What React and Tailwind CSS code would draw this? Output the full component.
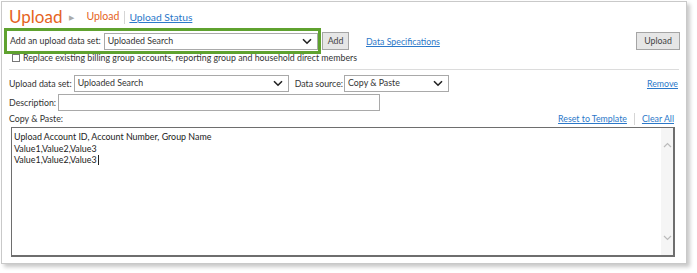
import React from "react";

const Chevron = ({ className = "" }) => (
  <svg width="10" height="7" viewBox="0 0 10 7" className={className}>
    <path d="M1 1.2 L5 5.2 L9 1.2" fill="none" stroke="#222" strokeWidth="1.6" />
  </svg>
);

const Select = ({ value, className = "" }) => (
  <div
    className={`flex items-center justify-between h-[17px] border border-[#a9a9a9] bg-white pl-[3px] pr-[5px] ${className}`}
  >
    <span className="leading-none">{value}</span>
    <Chevron />
  </div>
);

const Button = ({ children, className = "" }) => (
  <div
    className={`flex items-center justify-center h-[18px] border border-[#a5a5a5] bg-[#e6e6e6] text-[#444] ${className}`}
  >
    {children}
  </div>
);

const App = () => {
  return (
    <div
      className="bg-white w-[697px] h-[273px] pl-px pt-px text-[8.8px] text-[#333] whitespace-nowrap"
      style={{ fontFamily: 'Lato, "Open Sans", sans-serif' }}
    >
      <div className="w-[686px] h-[263px] border border-[#c9c9c9] bg-white shadow-[3px_3px_4px_rgba(0,0,0,0.22)] flex flex-col">
        {/* header */}
        <div className="flex items-end h-[25px] pl-[7px]">
          <span className="text-[17px] leading-none text-[#e5631d] pb-[2px]">Upload</span>
          <span className="ml-[7px] mb-[5px] text-[7px] text-[#aaa]">▶</span>
          <span className="ml-[12px] mb-[2px] text-[10.5px] text-[#e5631d]">Upload</span>
          <span className="ml-[5px] mb-[3px] h-[13px] border-l border-[#d5d5d5]" />
          <span className="ml-[4px] mb-[2px] text-[10.3px] text-[#2b78c9] underline">Upload Status</span>
        </div>

        {/* add data set */}
        <div className="flex items-center mt-[1px]">
          <div className="ml-[2px] w-[317px] h-[26px] border-[3px] border-[#5fa22f] flex items-center pl-[3px]">
            <span className="mr-[3px]">Add an upload data set:</span>
            <Select value="Uploaded Search" className="w-[215px]" />
          </div>
          <Button className="ml-[1px] w-[27px]">Add</Button>
          <span className="ml-[17px] mt-[2px] text-[#2b78c9] underline">Data Specifications</span>
          <div className="flex-1" />
          <Button className="mr-[6px] w-[44px]">Upload</Button>
        </div>

        {/* checkbox */}
        <div className="flex items-center pl-[10px] h-[10px] mt-[-1px]">
          <span className="w-[8px] h-[8px] border border-[#777] bg-white" />
          <span className="ml-[3px] leading-none">
            Replace existing billing group accounts, reporting group and household direct members
          </span>
        </div>

        <div className="mx-[7px] mt-[6px] border-t border-[#dcdcdc]" />

        {/* upload data set row */}
        <div className="flex items-center pl-[7px] mt-[5px]">
          <span className="mr-[2px]">Upload data set:</span>
          <Select value="Uploaded Search" className="w-[215px]" />
          <span className="ml-[6px] mr-[1px]">Data source:</span>
          <Select value="Copy & Paste" className="w-[105px]" />
          <div className="flex-1" />
          <span className="mr-[8px] text-[#2b78c9] underline">Remove</span>
        </div>

        {/* description */}
        <div className="flex items-center pl-[7px] mt-[2px]">
          <span className="mr-[2px]">Description:</span>
          <div className="w-[322px] h-[17px] border border-[#a9a9a9] bg-white" />
        </div>

        {/* copy paste header */}
        <div className="flex items-center pl-[7px] mt-[1px] h-[14px]">
          <span>Copy &amp; Paste:</span>
          <div className="flex-1" />
          <span className="text-[#2b78c9] underline">Reset to Template</span>
          <span className="mx-[7px] h-[12px] border-l border-[#d5d5d5]" />
          <span className="mr-[12px] text-[#2b78c9] underline">Clear All</span>
        </div>

        {/* textarea */}
        <div className="ml-[9px] mt-[1px] w-[664px] h-[130px] border border-[#6e6e6e] border-b-2 border-r-2 bg-white flex">
          <div className="flex-1 pl-[2px] pt-[3px] text-[8.9px] leading-[11.5px] text-[#222]">
            <div>Upload Account ID, Account Number, Group Name</div>
            <div>Value1,Value2,Value3</div>
            <div className="flex items-center">
              Value1,Value2,Value3
              <span className="ml-px h-[10px] border-l border-[#222]" />
            </div>
          </div>
          <div className="w-[12px] bg-[#f5f5f5] flex flex-col items-center justify-between py-[14px]">
            <svg width="9" height="6" viewBox="0 0 9 6">
              <path d="M1 5 L4.5 1.5 L8 5" fill="none" stroke="#bbb" strokeWidth="1.2" />
            </svg>
            <svg width="9" height="6" viewBox="0 0 9 6">
              <path d="M1 1 L4.5 4.5 L8 1" fill="none" stroke="#bbb" strokeWidth="1.2" />
            </svg>
          </div>
        </div>
      </div>
    </div>
  );
};

export default App;
